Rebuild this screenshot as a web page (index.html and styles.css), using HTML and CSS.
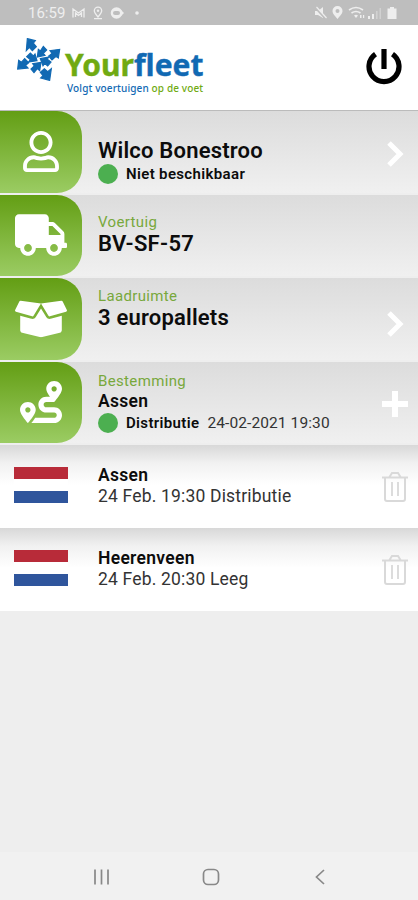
FILE: index.html
```html
<!DOCTYPE html>
<html lang="nl">
<head>
<meta charset="utf-8">
<title>Yourfleet</title>
<link rel="stylesheet" href="styles.css">
</head>
<body>
<svg class="defs" width="0" height="0" aria-hidden="true">
  <defs>
    <g id="trash" fill="none" stroke="#d9d9d9" stroke-width="2">
      <path d="M0 6.500h26M3 6.500V28q0 2 2 2h16q2 0 2-2V6.500M7.500 6 10 2h6l2.500 4" />
      <path d="M10 11v14M16 11v14" stroke-width="1.800"/>
    </g>
  </defs>
</svg>
<div class="status">
  <span class="time">16:59</span>
  <svg class="status-left" width="68" height="16" viewBox="0 0 68 16">
    <g fill="none" stroke="#eee" stroke-width="1.300">
      <path d="M1 12.500V4l5.500 4L12 4v8.500M3.500 12V8l3 2.500L9.500 8v4"/>
      <path d="M26 12c-2.500-3-3.700-4.500-3.700-6.200a3.700 3.700 0 0 1 7.400 0c0 1.700-1.200 3.200-3.700 6.200zM22 13.700h8"/>
    </g>
    <circle cx="26" cy="5.800" r="1.200" fill="#eee"/>
    <circle cx="44.500" cy="8" r="5.800" fill="#eee"/>
    <path d="M49 5l3 3-3 3z" fill="#eee"/>
    <rect x="41" y="6" width="7" height="4" rx="2" fill="#bebebe"/>
    <circle cx="65" cy="8" r="1.800" fill="#eee"/>
  </svg>
  <svg class="status-right" width="84" height="16" viewBox="0 0 84 16" fill="#eee">
    <path d="M1 6h3l5-4v11L4 10H1z"/>
    <path d="M1 2l11 12" stroke="#bebebe" stroke-width="2.500"/><path d="M2.500 2l10 11" stroke="#eee" stroke-width="1.200"/>
    <path fill-rule="evenodd" d="M23.500 14C20 10 18.500 8.200 18.500 6a5 5 0 0 1 10 0c0 2.200-1.500 4-5 8zm0-10a2 2 0 1 0 0 4 2 2 0 0 0 0-4z"/>
    <path d="M35 5q7-5 14 0M37.500 8q4.500-3 9 0" fill="none" stroke="#eee" stroke-width="1.600"/>
    <path d="M40 10.500q2-1.500 4 0l-2 2.500zM46 10h1.500v3H46zM49 10h1.200v3H49z"/>
    <path d="M54 11h2v3h-2zM58 9h2v5h-2z"/><path d="M62 6h1.600v8H62zM65.500 3H67v11h-1.500z" opacity=".4"/>
    <path d="M73.500 3.500h2.500V2h4v1.500h2.500V14h-9z"/>
  </svg>
</div>
<header class="header">
  <svg class="mark" width="44" height="44" viewBox="9 12 132 132" fill="#1169b3" stroke="#1169b3" stroke-width="3.500">
    <path d="M40 14 64 20 58 27 67 38 55 50 46 40 37 50z"/>
    <path d="M137 46 133 72 126 67 114 78 104 66 114 58 108 50z"/>
    <path d="M11 105 14 79 22 85 32 74 44 86 35 94 42 102z"/>
    <path d="M107 139 80 132 87 125 79 115 91 104 101 113 112 104z"/>
    <path d="M88 37 98 48 88 58 93 64 70 69 73 46 79 51z"/>
    <path d="M79 74 104 69 100 76 111 84 101 96 92 88 87 95z"/>
    <path d="M81 85 77 110 70 104 60 116 51 105 61 96 56 89z"/>
    <path d="M69 80 44 84 49 77 38 68 49 57 58 66 63 60z"/>
  </svg>
  <div class="brand">
    <div class="name"><span class="green">Your</span><span class="blue">fleet</span></div>
    <div class="slogan"><span class="blue">Volgt voertuigen</span> <span class="green">op de voet</span></div>
  </div>
  <svg class="power" width="36" height="36" viewBox="0 0 36 36" fill="none" stroke="#000" stroke-width="5.200">
    <path d="M9.500 5.200a15 15 0 1 0 17 0M18 0v20" />
  </svg>
</header>
<main>
  <section class="row">
    <div class="tile"><svg class="i-user" viewBox="0 0 448 512"><path d="M313.600 304c-28.700 0-42.500 16-89.600 16-47.100 0-60.800-16-89.600-16C60.200 304 0 364.200 0 438.400V464c0 26.500 21.500 48 48 48h352c26.500 0 48-21.500 48-48v-25.600c0-74.200-60.200-134.400-134.400-134.400zM400 464H48v-25.600c0-47.600 38.800-86.400 86.400-86.400 14.600 0 38.300 16 89.600 16 51.700 0 74.900-16 89.600-16 47.600 0 86.400 38.800 86.400 86.400V464zM224 288c79.500 0 144-64.500 144-144S303.500 0 224 0 80 64.500 80 144s64.500 144 144 144zm0-240c52.900 0 96 43.100 96 96s-43.100 96-96 96-96-43.100-96-96 43.100-96 96-96z"/></svg></div>
    <div class="body driver">
      <div class="title">Wilco Bonestroo</div>
      <div class="state"><i class="dot"></i><b>Niet beschikbaar</b></div>
    </div>
    <svg class="chev" width="18" height="28" viewBox="0 0 18 28"><path d="M3 3l11 11L3 25"/></svg>
  </section>
  <section class="row">
    <div class="tile"><svg class="i-wide" viewBox="0 0 640 512"><path d="M624 352h-16V243.900c0-12.700-5.100-24.900-14.100-33.900L494 110.100c-9-9-21.200-14.100-33.900-14.100H416V48c0-26.500-21.500-48-48-48H48C21.500 0 0 21.500 0 48v320c0 26.500 21.500 48 48 48h16c0 53 43 96 96 96s96-43 96-96h128c0 53 43 96 96 96s96-43 96-96h48c8.800 0 16-7.200 16-16v-32c0-8.800-7.200-16-16-16zM160 464c-26.500 0-48-21.500-48-48s21.500-48 48-48 48 21.500 48 48-21.500 48-48 48zm320 0c-26.500 0-48-21.500-48-48s21.500-48 48-48 48 21.500 48 48-21.500 48-48 48zm80-208H416V144h44.100l99.900 99.900V256z"/></svg></div>
    <div class="body vehicle">
      <div class="label">Voertuig</div>
      <div class="title plate">BV-SF-57</div>
    </div>
  </section>
  <section class="row">
    <div class="tile"><svg class="i-wide" viewBox="0 0 640 512"><path d="M425.700 256c-16.900 0-32.800-9-41.400-23.400L320 126l-64.200 106.600c-8.700 14.500-24.600 23.500-41.500 23.500-4.500 0-9-.6-13.300-1.900L64 215v178c0 14.700 10 27.500 24.200 31l216.200 54.100c10.200 2.500 20.900 2.500 31 0L551.800 424c14.200-3.600 24.200-16.400 24.200-31V215l-137 39.100c-4.300 1.300-8.800 1.900-13.300 1.900zm212.600-112.200L586.800 41c-3.100-6.200-9.800-9.800-16.700-8.900L320 64l91.700 152.100c3.800 6.300 11.400 9.300 18.500 7.300l197.900-56.500c9.900-2.900 14.700-13.900 10.200-23.100zM53.200 41L1.700 143.800c-4.600 9.200.3 20.200 10.100 23l197.900 56.500c7.100 2 14.700-1 18.500-7.300L320 64 69.800 32.100c-6.900-.8-13.500 2.700-16.600 8.900z"/></svg></div>
    <div class="body cargo">
      <div class="label">Laadruimte</div>
      <div class="title">3 europallets</div>
    </div>
    <svg class="chev low" width="18" height="28" viewBox="0 0 18 28"><path d="M3 3l11 11L3 25"/></svg>
  </section>
  <section class="row">
    <div class="tile"><svg class="i-route" viewBox="0 0 512 512"><path d="M416 320h-96c-17.600 0-32-14.400-32-32s14.400-32 32-32h96s96-107 96-160-43-96-96-96-96 43-96 96c0 25.500 22.200 63.400 45.300 96H320c-52.900 0-96 43.100-96 96s43.100 96 96 96h96c17.600 0 32 14.400 32 32s-14.400 32-32 32H185.500c-16 24.800-33.800 47.700-47.300 64H416c52.900 0 96-43.100 96-96s-43.100-96-96-96zm0-256c17.700 0 32 14.300 32 32s-14.300 32-32 32-32-14.300-32-32 14.300-32 32-32zM96 256c-53 0-96 43-96 96s96 160 96 160 96-107 96-160-43-96-96-96zm0 128c-17.700 0-32-14.300-32-32s14.300-32 32-32 32 14.300 32 32-14.300 32-32 32z"/></svg></div>
    <div class="body dest">
      <div class="label">Bestemming</div>
      <div class="city">Assen</div>
      <div class="state"><i class="dot"></i><b>Distributie</b><span class="date">24-02-2021 19:30</span></div>
    </div>
    <svg class="plus" width="28" height="28" viewBox="0 0 28 28"><path d="M14 1v26M1 14h26"/></svg>
  </section>
  <section class="stop">
    <div class="flag"></div>
    <div class="stop-text"><div class="city">Assen</div><div class="when">24 Feb. 19:30 Distributie</div></div>
    <svg class="trash" width="26" height="32" viewBox="0 0 26 32"><use href="#trash"/></svg>
  </section>
  <section class="stop">
    <div class="flag"></div>
    <div class="stop-text"><div class="city">Heerenveen</div><div class="when">24 Feb. 20:30 Leeg</div></div>
    <svg class="trash" width="26" height="32" viewBox="0 0 26 32"><use href="#trash"/></svg>
  </section>
</main>
<nav class="nav">
  <svg width="18" height="18" viewBox="0 0 18 18"><path d="M2 1.500v15M8.500 1.500v15M15 1.500v15"/></svg>
  <svg width="18" height="18" viewBox="0 0 18 18"><rect x="1.500" y="1.500" width="15" height="15" rx="4.500"/></svg>
  <svg width="18" height="18" viewBox="0 0 18 18"><path d="M13 2L5.500 9l7.500 7"/></svg>
</nav>
</body>
</html>
```
FILE: styles.css
```css
* { box-sizing: border-box; }
body {
  margin: 0;
  width: 418px;
  height: 900px;
  display: flex;
  flex-direction: column;
  background: #eee;
  color: #0c0c0c;
  font-family: Roboto, "Liberation Sans", sans-serif;
  overflow: hidden;
}
svg { display: block; flex: none; }
.defs { position: absolute; }
.status {
  height: 25px;
  background: #bebebe;
  display: flex;
  align-items: center;
  padding: 0 20px 0 28px;
}
.time { width: 44px; color: #eee; font-size: 15px; line-height: 25px; padding-top: 1px; }
.status-right { margin-left: auto; }
.header {
  height: 86px;
  background: #fff;
  display: flex;
  border-bottom: 1px solid #bbb;
}
.mark { margin: 13px 0 0 17px; }
.brand { margin: 23px 0 0 4px; white-space: nowrap; font-family: "Noto Sans", "Open Sans", sans-serif; }
.name { font-size: 30px; line-height: 34px; font-weight: 700; letter-spacing: 0; -webkit-text-stroke: 0.4px; }
.slogan { margin-left: 2px; font-size: 10px; line-height: 13px; font-weight: 500; letter-spacing: 0.13px; }
.green { color: #70aa12; }
.blue { color: #1169b3; }
.power { margin: 24px 16px 0 auto; }
.row {
  height: 83.500px;
  display: flex;
  background: linear-gradient(#dcdcdc, #f0f0f0);
  border-bottom: 2px solid #eee;
}
.tile {
  width: 82px;
  height: 81.500px;
  flex: none;
  display: flex;
  align-items: center;
  justify-content: center;
  border-radius: 0 25px 25px 0;
  background: linear-gradient(#639e14, #9bcc63);
}
.tile svg { fill: #fff; }
.i-user { width: 36px; height: 41px; }
.i-wide { width: 52px; height: 42px; }
.i-route { width: 42px; height: 42px; }
.body { margin-left: 16px; white-space: nowrap; }
.driver { padding-top: 27px; }
.vehicle { padding-top: 18px; }
.cargo { padding-top: 9px; }
.dest { padding-top: 10px; }
.title { font-size: 22px; line-height: 26px; font-weight: 600; letter-spacing: 0.2px; }
.plate { letter-spacing: 0.3px; }
.driver .title { line-height: 25px; }
.label { font-size: 15px; line-height: 18px; color: #78a83c; letter-spacing: 0.35px; }
.city { font-size: 17.5px; line-height: 22px; font-weight: 600; letter-spacing: 0.3px; }
.state { display: flex; align-items: center; height: 22px; }
.state b { margin-left: 8px; font-size: 15px; font-weight: 600; letter-spacing: 0.35px; }
.dot { width: 20px; height: 20px; border-radius: 50%; background: #4caf50; }
.date { margin-left: 8px; font-size: 15.5px; color: #333; letter-spacing: 0.1px; }
.chev { margin: 29px 14px 0 auto; fill: none; stroke: #fff; stroke-width: 5; }
.low { margin-top: 32px; }
.plus { margin: 28px 9px 0 auto; fill: none; stroke: #fff; stroke-width: 6; }
.stop {
  height: 82.75px;
  display: flex;
  background: linear-gradient(#d8d8d8, #f1f1f1 18px, #fff 40px);
}
.flag {
  width: 54px;
  height: 36px;
  margin: 22px 0 0 14px;
  background: linear-gradient(#b82b39 12px, #fff 12px 24px, #2f559c 24px);
}
.stop-text { margin: 19px 0 0 30px; white-space: nowrap; }
.when { font-size: 17.5px; line-height: 21px; color: #333; letter-spacing: 0.18px; }
.trash { margin: 26px 10px 0 auto; }
.nav {
  height: 48px;
  margin-top: auto;
  background: #f1f1f1;
  display: flex;
  justify-content: space-between;
  align-items: center;
  padding: 2px 89px 0 93px;
}
.nav svg { fill: none; stroke: #888; stroke-width: 1.700; }
```
